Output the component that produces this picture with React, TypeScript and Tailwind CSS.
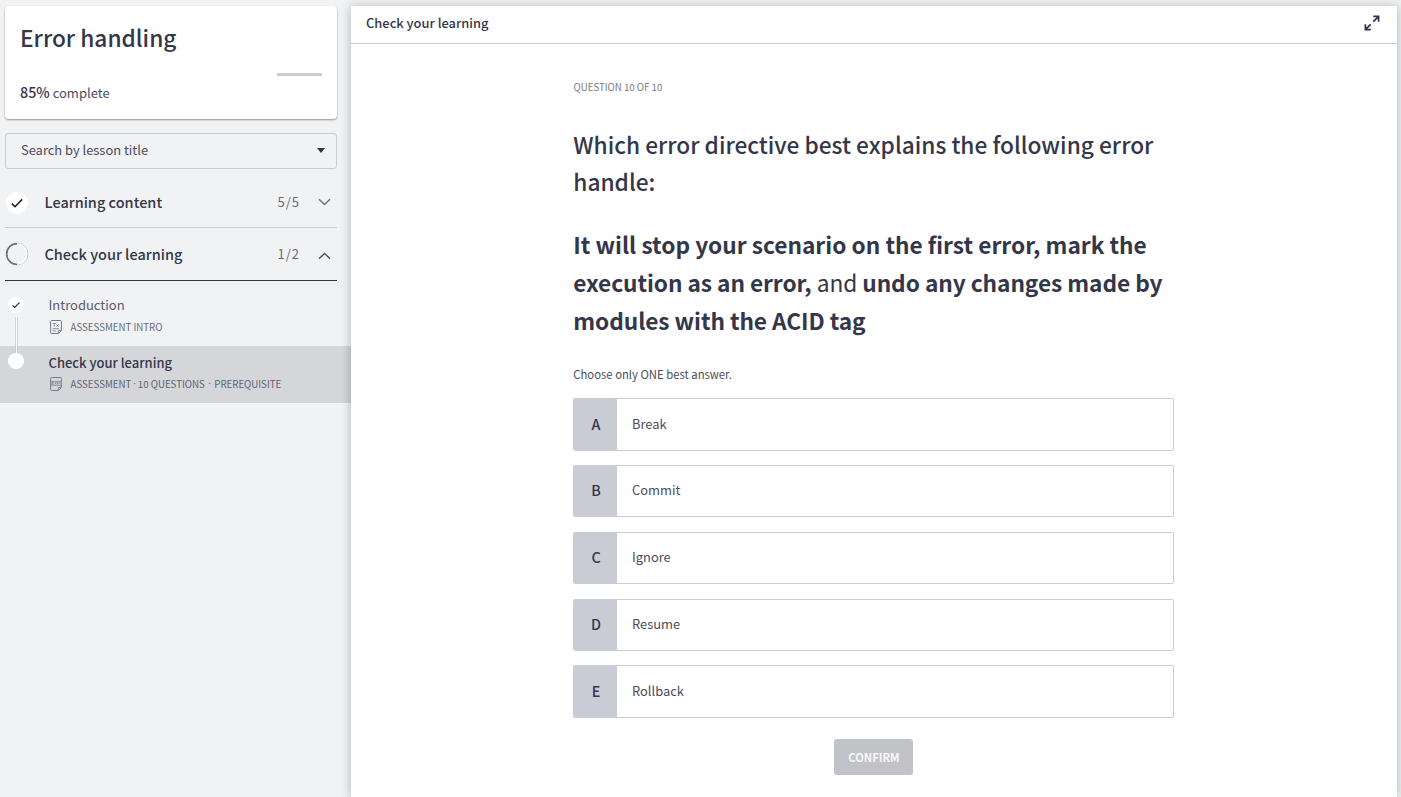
import React from "react";

const answers = [
  { letter: "A", text: "Break", gap: "h-[53px] mb-[14px]" },
  { letter: "B", text: "Commit", gap: "h-[52px] mb-[15px]" },
  { letter: "C", text: "Ignore", gap: "h-[52px] mb-[15px]" },
  { letter: "D", text: "Resume", gap: "h-[52px] mb-[14px]" },
  { letter: "E", text: "Rollback", gap: "h-[53px]" },
];

function DocIcon({ label }: { label: string }) {
  return (
    <svg width="12" height="14" viewBox="0 0 12 14" fill="none" stroke="#777889" strokeWidth="1" className="shrink-0">
      <path d="M1.500 .5h9a.9.9 0 0 1 .9.9V10.500l-3 3H1.500A.9.9 0 0 1 .6 12.600V1.400A.9.9 0 0 1 1.500 .5Z" />
      <path d="M8.300 13.300v-2.200a.7.7 0 0 1 .7-.7h2.300" />
      {label === "text" ? (
        <path d="M2.500 3.500h3.500M4.200 3.500v3.200M6.500 4.400l2 2.300M8.500 4.400l-2 2.300M2.500 8.700h6.500M2.500 10.900h3.800" strokeWidth=".8" />
      ) : (
        <path d="M1 4.500h10M1 8.300h10M3.600 5.300H2v2h1.600M2 6.300h1.400M4.800 5.300l1.500 2M6.300 5.300 4.800 7.300M7.500 7.300v-2l1.200 1 1.200-1v2" strokeWidth=".7" />
      )}
    </svg>
  );
}

function Check({ size }: { size: number }) {
  return (
    <svg width={size} height={size} viewBox="0 0 12 12" fill="none" stroke="#202126" strokeWidth="1.600">
      <path d="m.8 6.700 3.200 3 7.200-7.300" />
    </svg>
  );
}

function Sidebar() {
  return (
    <aside className="w-[351px] shrink-0 pt-[6px]">
      <div className="ml-[5px] h-[113px] w-[332px] rounded-[4px] bg-white px-[15px] pt-[15px] shadow-[0_1px_2px_rgba(0,0,0,0.4)]">
        <h1 className="text-[22.700px] leading-[34px] font-medium">Error handling</h1>
        <div className="mt-[18px] flex h-[3px] justify-end">
          <div className="w-[45px] rounded-r-[1px] bg-[#c9cbd5]" />
        </div>
        <p className="mt-[6px] text-[13px] leading-[20px] text-[#4b4c5b]">
          <span className="text-[14.300px] font-medium text-[#343649]">85%</span> complete
        </p>
      </div>
      <div className="mt-[14px] ml-[5px] flex h-[36px] w-[332px] items-center justify-between rounded-[3px] border border-[#c9cbd5] pr-[11px] pl-[15px]">
        <span className="mb-[2px] text-[12.900px] leading-[20px] text-[#4b4c5b]">Search by lesson title</span>
        <svg width="8" height="5" viewBox="0 0 8 5" className="mb-[1px]">
          <path d="M0 0h8L4 5Z" fill="#313347" />
        </svg>
      </div>
      <div className="mt-[9px] ml-[5px] flex h-[50px] w-[332px] items-center border-b border-[#c9cbd5] pr-[6px]">
        <span className="ml-[1px] flex size-[22px] items-center justify-center rounded-full bg-white">
          <Check size={12} />
        </span>
        <span className="mb-[2px] ml-[16.500px] flex-1 text-[14.500px] leading-[22px] font-medium">Learning content</span>
        <span className="mb-[2px] mr-[18px] text-[13px] tracking-[1px] text-[#686a7c]">5/5</span>
        <svg width="13" height="8" viewBox="0 0 13 8" fill="none" stroke="#6c6e7f" strokeWidth="1.400" className="mb-[1px]">
          <path d="m1 1.200 5.500 5.400L12 1.200" />
        </svg>
      </div>
      <div className="ml-[5px] flex h-[53px] w-[332px] items-center border-b border-[#313347] pr-[6px]">
        <svg width="24" height="24" viewBox="0 0 24 24" fill="none">
          <circle cx="12" cy="12" r="10" stroke="#fff" strokeWidth="2" />
          <path d="M12 1a11 11 0 0 1 0 22" stroke="#b9bac3" strokeWidth=".7" />
          <path d="M12 1.700a10.300 10.300 0 0 0 0 20.600" stroke="#6c6e7f" strokeWidth="1.700" />
        </svg>
        <span className="ml-[15.500px] flex-1 text-[14.500px] leading-[22px] font-medium">Check your learning</span>
        <span className="mr-[18px] text-[13px] tracking-[1px] text-[#686a7c]">1/2</span>
        <svg width="13" height="8" viewBox="0 0 13 8" fill="none" stroke="#4b4c5f" strokeWidth="1.400" className="mt-[3px]">
          <path d="m1 6.800 5.500-5.400L12 6.800" />
        </svg>
      </div>
      <div className="flex h-[65px]">
        <div className="flex w-[48px] flex-col items-center pt-[16px] pr-[16px]">
          <span className="flex size-[16px] shrink-0 items-center justify-center rounded-full bg-white">
            <Check size={8} />
          </span>
          <div className="mt-[4px] w-[3px] flex-1 border-x border-[#d3d4d9] bg-white" />
        </div>
        <div className="pt-[14px]">
          <p className="ml-[.5px] text-[13px] leading-[20px] text-[#5b5c6e]">Introduction</p>
          <div className="mt-[4px] flex items-center">
            <span className="ml-[1.500px] mr-[9px]"><DocIcon label="text" /></span>
            <span className="text-[9.700px] leading-[16px] text-[#686a7c]">ASSESSMENT INTRO</span>
          </div>
        </div>
      </div>
      <div className="flex h-[57px] bg-[#d5d6da]">
        <div className="flex w-[48px] flex-col items-center pr-[16px]">
          <div className="h-[7px] w-[3px] border-x border-[#c9cad0] bg-white" />
          <span className="size-[16px] shrink-0 rounded-full bg-white" />
        </div>
        <div className="pt-[7px]">
          <p className="ml-[.5px] text-[13px] leading-[20px] font-medium">Check your learning</p>
          <div className="mt-[3px] flex items-center">
            <span className="ml-[1.500px] mr-[9px]"><DocIcon label="exam" /></span>
            <div className="flex text-[9.700px] leading-[16px] whitespace-nowrap text-[#5f6073]">
              <span>ASSESSMENT</span>
              <span className="w-[6.500px] text-center [font-family:'Noto_Sans',sans-serif]">·</span>
              <span>10 QUESTIONS</span>
              <span className="w-[9.500px] text-center [font-family:'Noto_Sans',sans-serif]">·</span>
              <span>PREREQUISITE</span>
            </div>
          </div>
        </div>
      </div>
    </aside>
  );
}

export default function App() {
  return (
    <div className="flex h-[797px] w-[1401px] overflow-hidden bg-[#f1f2f4] text-[#343649] [font-family:'Noto_Sans_CJK_SC',sans-serif]">
      <Sidebar />
      <main className="mt-[6px] w-[1046px] bg-white shadow-[0_1px_10px_rgba(0,0,0,0.27)]">
        <header className="flex h-[38px] items-center justify-between border-b border-[#c9cbd5] pr-[17px] pb-[3px] pl-[15px]">
          <h2 className="text-[12.900px] leading-[20px] font-medium">Check your learning</h2>
          <svg width="16" height="16" viewBox="0 0 16 16" fill="none" stroke="#313347" strokeWidth="1.700">
            <path d="M9.300 1.400h5.300v5.300M14.400 1.600 9.300 6.700M6.700 14.600H1.400V9.300M1.600 14.400l5.100-5.100" />
          </svg>
        </header>
        <section className="ml-[222px] w-[601px] pt-[35px]">
          <p className="ml-[.5px] text-[9.700px] leading-[16px] text-[#777983]">QUESTION 10 OF 10</p>
          <h3 className="mt-[31px] ml-[.3px] text-[22.700px] leading-[37px] font-medium">
            Which error directive best explains the following error<br />handle:
          </h3>
          <p className="mt-[26px] ml-[.3px] text-[22.700px] leading-[38px] font-bold">
            It will stop your scenario on the first error, mark the<br />
            <span className="tracking-[-0.070px]">
              execution as an error, <span className="font-normal">and</span> undo any changes made by<br />
              modules with the ACID tag
            </span>
          </p>
          <p className="mt-[26px] ml-[.3px] text-[11.300px] leading-[16px] text-[#4b4c5b]">Choose only ONE best answer.</p>
          <ul className="mt-[16px]">
            {answers.map((a) => (
              <li key={a.letter} className={`flex overflow-hidden rounded-[2px] border border-[#c9cbd5] ${a.gap}`}>
                <span className="flex w-[43px] items-center justify-center bg-[#c9cbd5] pb-[2px] pl-[1px] text-[14.300px] font-medium">{a.letter}</span>
                <span className="mb-[2px] ml-[15px] self-center text-[12.900px] leading-[20px] text-[#4b4c5b]">{a.text}</span>
              </li>
            ))}
          </ul>
          <div className="mt-[21px] flex justify-center">
            <button className="h-[36px] w-[79px] rounded-[3px] bg-[#c2c3c9] pl-[1px] text-[11.200px] font-bold text-[#f7f7f8]">CONFIRM</button>
          </div>
        </section>
      </main>
    </div>
  );
}
